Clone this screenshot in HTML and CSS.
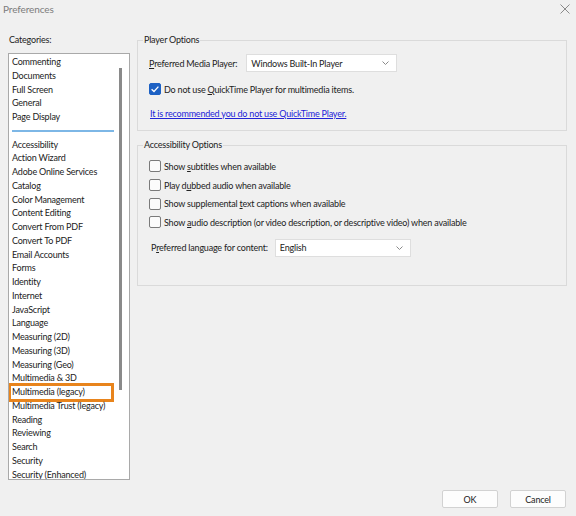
FILE: index.html
```html
<!DOCTYPE html>
<html>
<head>
<meta charset="utf-8">
<link rel="stylesheet" href="styles.css">
</head>
<body>
<div class="window">
  <div class="titlebar">
    <span class="title">Preferences</span>
    <svg class="close" width="10" height="10" viewBox="0 0 10 10"><path d="M0.5 0.5 L9.5 9.5 M9.5 0.5 L0.5 9.5" stroke="#8a8a8a" stroke-width="1" fill="none"/></svg>
  </div>
  <div class="main">
    <div class="sidebar">
      <div class="cat-label">Categories:</div>
      <div class="listbox">
        <div class="items">
          <div class="item">Commenting</div>
          <div class="item">Documents</div>
          <div class="item">Full Screen</div>
          <div class="item">General</div>
          <div class="item">Page Display</div>
          <div class="sep"><span></span></div>
          <div class="item">Accessibility</div>
          <div class="item">Action Wizard</div>
          <div class="item">Adobe Online Services</div>
          <div class="item">Catalog</div>
          <div class="item">Color Management</div>
          <div class="item">Content Editing</div>
          <div class="item">Convert From PDF</div>
          <div class="item">Convert To PDF</div>
          <div class="item">Email Accounts</div>
          <div class="item">Forms</div>
          <div class="item">Identity</div>
          <div class="item">Internet</div>
          <div class="item">JavaScript</div>
          <div class="item">Language</div>
          <div class="item">Measuring (2D)</div>
          <div class="item">Measuring (3D)</div>
          <div class="item">Measuring (Geo)</div>
          <div class="item">Multimedia &amp; 3D</div>
          <div class="item selected">Multimedia (legacy)</div>
          <div class="item">Multimedia Trust (legacy)</div>
          <div class="item">Reading</div>
          <div class="item">Reviewing</div>
          <div class="item">Search</div>
          <div class="item">Security</div>
          <div class="item">Security (Enhanced)</div>
        </div>
        <div class="scrollbar"><div class="thumb"></div></div>
      </div>
    </div>
    <div class="panel">
      <fieldset class="group player">
        <legend>Player Options</legend>
        <div class="row r1">
          <span class="label"><u>P</u>referred Media Player:</span>
          <div class="select sel-player"><span>Windows Built-In Player</span>
            <svg class="chev" width="7" height="4" viewBox="0 0 7 4"><path d="M0.5 0.5 L3.5 3.5 L6.5 0.5" stroke="#8a8a8a" fill="none"/></svg>
          </div>
        </div>
        <div class="row r2">
          <span class="cb checked"><svg width="12" height="12" viewBox="0 0 12 12"><path d="M2.6 6.2 L5 8.5 L9.4 3.6" stroke="#fff" stroke-width="1.3" fill="none"/></svg></span>
          <span>Do not use <u>Q</u>uickTime Player for multimedia items.</span>
        </div>
        <div class="row r3">
          <a class="link" href="#">It is recommended you do not use QuickTime Player.</a>
        </div>
      </fieldset>
      <fieldset class="group access">
        <legend>Accessibility Options</legend>
        <div class="crow"><span class="cb"></span><span>Show <u>s</u>ubtitles when available</span></div>
        <div class="crow"><span class="cb"></span><span>Play d<u>u</u>bbed audio when available</span></div>
        <div class="crow"><span class="cb"></span><span>Show supplemental <u>t</u>ext captions when available</span></div>
        <div class="crow"><span class="cb"></span><span>Show <u>a</u>udio description (or video description, or descriptive video) when available</span></div>
        <div class="row lang">
          <span class="label">P<u>r</u>eferred language for content:</span>
          <div class="select sel-lang"><span>English</span>
            <svg class="chev" width="7" height="4" viewBox="0 0 7 4"><path d="M0.5 0.5 L3.5 3.5 L6.5 0.5" stroke="#8a8a8a" fill="none"/></svg>
          </div>
        </div>
      </fieldset>
    </div>
  </div>
  <div class="footer">
    <button class="btn">OK</button>
    <button class="btn">Cancel</button>
  </div>
</div>
</body>
</html>
```

FILE: styles.css
```css
* { box-sizing: border-box; }
html, body { margin: 0; padding: 0; }
body {
  width: 576px;
  height: 516px;
  background: #f0f0f0;
  font-family: Lato, "Noto Sans", sans-serif;
  font-size: 9px;
  letter-spacing: -0.2px;
  color: #222;
  overflow: hidden;
}
.window { display: flex; flex-direction: column; height: 516px; }
.titlebar {
  height: 17px;
  display: flex;
  align-items: center;
  justify-content: space-between;
  padding: 1px 6px 0 3px;
}
.title { color: #7c7c7c; font-size: 10px; letter-spacing: -0.1px; }

.main {
  display: flex;
  gap: 7px;
  padding: 16px 0 0 8px;
  height: 463px;
}
.sidebar { width: 122px; display: flex; flex-direction: column; }
.cat-label { height: 14px; line-height: 14px; padding-left: 1px; }
.listbox {
  margin-top: 6px;
  height: 427px;
  background: #fff;
  border: 1px solid #a9a9a9;
  display: flex;
  overflow: hidden;
}
.items { flex: 1; padding-top: 1px; }
.item {
  height: 13.75px;
  line-height: 13.75px;
  padding-left: 3px;
  white-space: nowrap;
  position: relative;
}
.item.selected::after {
  content: "";
  position: absolute;
  left: -1px;
  right: 2px;
  top: -2px;
  bottom: -3px;
  border: 3px solid #e8841c;
}
.sep { height: 13.75px; display: flex; align-items: center; padding: 0 2px 0 3px; }
.sep span { display: block; height: 2px; width: 100%; background: #7db7e6; }
.scrollbar { width: 13px; padding: 14px 0 0 3px; }
.thumb { width: 3px; height: 322px; background: #8a8a8a; }

.panel { width: 430px; display: flex; flex-direction: column; }
.group {
  margin: 0;
  border: 1px solid #dadada;
  padding: 0 0 0 10px;
}
.group legend {
  padding: 0 1px;
  margin-left: -5px;
  height: 14px;
  line-height: 14px;
}
.player { padding-top: 7px; padding-bottom: 8px; }
.access { margin-top: 7px; padding-top: 5px; padding-bottom: 28px; }

.row { display: flex; align-items: center; height: 18px; white-space: nowrap; }
.r2 { margin-top: 8px; }
.r3 { margin-top: 6px; padding-left: 2px; }
.label { padding-left: 1px; }
.select {
  background: #fff;
  border: 1px solid #dedede;
  height: 18px;
  display: flex;
  align-items: center;
  justify-content: space-between;
  padding: 0 7px 0 4px;
}
.sel-player { margin-left: 9px; width: 151px; }
.sel-lang { margin-left: 7px; width: 136px; }
.chev { display: block; }

.cb {
  width: 12px;
  height: 12px;
  border: 1px solid #7a7a7a;
  border-radius: 2px;
  background: #fbfbfb;
  margin-right: 3px;
  flex: none;
  display: flex;
}
.cb.checked { background: #1d61c4; border-color: #1d61c4; margin-left: 1px; }
.cb.checked svg { margin: -1px; }
.crow { display: flex; align-items: center; height: 18.7px; white-space: nowrap; padding-left: 1px; }
.lang { margin-top: 7px; padding-left: 2px; }
.link { color: #2323d8; text-decoration: underline; }

.footer {
  flex: 1;
  display: flex;
  justify-content: flex-end;
  align-items: flex-start;
  gap: 12px;
  padding: 10px 10px 0 0;
}
.btn {
  width: 56px;
  height: 18px;
  background: #fdfdfd;
  border: 1px solid #d2d2d2;
  border-radius: 2px;
  font-family: Lato, "Noto Sans", sans-serif;
  font-size: 9px;
  letter-spacing: -0.2px;
  color: #222;
  padding: 0;
}
```
